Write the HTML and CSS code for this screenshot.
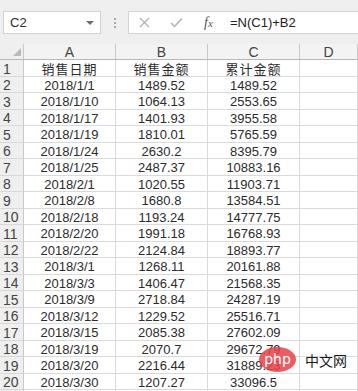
FILE: index.html
```html
<!DOCTYPE html>
<html>
  <head>
    <meta charset="UTF-8">
    <title>Sheet</title>
    <link rel="stylesheet" href="styles.css">
  </head>
  <body>
    <div class="formula-bar">
      <div class="name-box">
        <span class="cell-ref">C2</span>
        <span class="arrow"></span>
      </div>
      <div class="grip">
        <span></span><span></span><span></span>
      </div>
      <div class="formula-box">
        <span class="btn">
          <svg width="11" height="11" viewBox="0 0 11 11"><path d="M1 1L10 10M10 1L1 10" stroke="#b0b0b0" stroke-width="1.2" fill="none"/></svg>
        </span>
        <span class="btn">
          <svg width="13" height="11" viewBox="0 0 13 11"><path d="M1 6L4.5 9.5L12 1.5" stroke="#b0b0b0" stroke-width="1.4" fill="none"/></svg>
        </span>
        <span class="btn fx">f<i>x</i></span>
        <span class="formula">=N(C1)+B2</span>
      </div>
    </div>

    <div class="sheet">
      <div class="row col-heads">
        <div class="rh corner"><span class="tri"></span></div>
        <div class="cell">A</div><div class="cell">B</div><div class="cell">C</div><div class="cell">D</div>
      </div>
      <div class="row"><div class="rh">1</div><div class="cell zh">销售日期</div><div class="cell zh">销售金额</div><div class="cell zh">累计金额</div><div class="cell"></div></div>
      <div class="row"><div class="rh">2</div><div class="cell">2018/1/1</div><div class="cell">1489.52</div><div class="cell">1489.52</div><div class="cell"></div></div>
      <div class="row"><div class="rh">3</div><div class="cell">2018/1/10</div><div class="cell">1064.13</div><div class="cell">2553.65</div><div class="cell"></div></div>
      <div class="row"><div class="rh">4</div><div class="cell">2018/1/17</div><div class="cell">1401.93</div><div class="cell">3955.58</div><div class="cell"></div></div>
      <div class="row"><div class="rh">5</div><div class="cell">2018/1/19</div><div class="cell">1810.01</div><div class="cell">5765.59</div><div class="cell"></div></div>
      <div class="row"><div class="rh">6</div><div class="cell">2018/1/24</div><div class="cell">2630.2</div><div class="cell">8395.79</div><div class="cell"></div></div>
      <div class="row"><div class="rh">7</div><div class="cell">2018/1/25</div><div class="cell">2487.37</div><div class="cell">10883.16</div><div class="cell"></div></div>
      <div class="row"><div class="rh">8</div><div class="cell">2018/2/1</div><div class="cell">1020.55</div><div class="cell">11903.71</div><div class="cell"></div></div>
      <div class="row"><div class="rh">9</div><div class="cell">2018/2/8</div><div class="cell">1680.8</div><div class="cell">13584.51</div><div class="cell"></div></div>
      <div class="row"><div class="rh">10</div><div class="cell">2018/2/18</div><div class="cell">1193.24</div><div class="cell">14777.75</div><div class="cell"></div></div>
      <div class="row"><div class="rh">11</div><div class="cell">2018/2/20</div><div class="cell">1991.18</div><div class="cell">16768.93</div><div class="cell"></div></div>
      <div class="row"><div class="rh">12</div><div class="cell">2018/2/22</div><div class="cell">2124.84</div><div class="cell">18893.77</div><div class="cell"></div></div>
      <div class="row"><div class="rh">13</div><div class="cell">2018/3/1</div><div class="cell">1268.11</div><div class="cell">20161.88</div><div class="cell"></div></div>
      <div class="row"><div class="rh">14</div><div class="cell">2018/3/3</div><div class="cell">1406.47</div><div class="cell">21568.35</div><div class="cell"></div></div>
      <div class="row"><div class="rh">15</div><div class="cell">2018/3/9</div><div class="cell">2718.84</div><div class="cell">24287.19</div><div class="cell"></div></div>
      <div class="row"><div class="rh">16</div><div class="cell">2018/3/12</div><div class="cell">1229.52</div><div class="cell">25516.71</div><div class="cell"></div></div>
      <div class="row"><div class="rh">17</div><div class="cell">2018/3/15</div><div class="cell">2085.38</div><div class="cell">27602.09</div><div class="cell"></div></div>
      <div class="row"><div class="rh">18</div><div class="cell">2018/3/19</div><div class="cell">2070.7</div><div class="cell">29672.79</div><div class="cell"></div></div>
      <div class="row"><div class="rh">19</div><div class="cell">2018/3/20</div><div class="cell">2216.44</div><div class="cell">31889.23</div><div class="cell"></div></div>
      <div class="row"><div class="rh">20</div><div class="cell">2018/3/30</div><div class="cell">1207.27</div><div class="cell">33096.5</div><div class="cell"></div></div>
      <div class="row stub"><div class="rh"></div><div class="cell"></div><div class="cell"></div><div class="cell"></div><div class="cell"></div></div>
    </div>

    <div class="watermark">
      <span class="php">php</span>
      <span class="site">中文网</span>
    </div>
  </body>
</html>
```

FILE: styles.css
```css
body {
  margin: 0;
  padding: 0;
  width: 358px;
  height: 391px;
  overflow: hidden;
  background-color: #ffffff;
  font-family: "Liberation Sans", "Noto Sans CJK SC", sans-serif;
  color: #2b2b2b;
  position: relative;
}

.formula-bar {
  display: flex;
  align-items: flex-start;
  height: 44px;
  box-sizing: border-box;
  padding: 11px 0 0 3px;
  background-color: #efefef;
}

.name-box {
  display: flex;
  align-items: center;
  justify-content: space-between;
  width: 98px;
  height: 23px;
  box-sizing: border-box;
  padding: 0 6px 0 6px;
  background-color: #ffffff;
  border: 1px solid #d2d2d2;
  font-size: 13px;
}

.arrow {
  width: 0;
  height: 0;
  border-left: 4px solid transparent;
  border-right: 4px solid transparent;
  border-top: 4px solid #6d6d6d;
}

.grip {
  display: flex;
  flex-direction: column;
  align-items: center;
  justify-content: center;
  gap: 2px;
  width: 27px;
  height: 23px;
}

.grip span {
  width: 2px;
  height: 2px;
  background-color: #a8a8a8;
}

.formula-box {
  display: flex;
  align-items: center;
  flex: 1;
  height: 23px;
  box-sizing: border-box;
  padding-left: 8px;
  background-color: #ffffff;
  border: 1px solid #d2d2d2;
  border-right: none;
}

.btn {
  display: flex;
  align-items: center;
  justify-content: center;
  width: 15px;
  margin-right: 17px;
}

.btn.fx {
  font-family: "Liberation Serif", serif;
  font-style: italic;
  font-size: 14px;
  color: #555555;
  margin-right: 14px;
}

.btn.fx i {
  font-size: 11px;
}

.formula {
  font-size: 13px;
  color: #222222;
}

/* grid */
.sheet {
  display: flex;
  flex-direction: column;
  font-size: 13px;
}

.row {
  display: grid;
  grid-template-columns: 24px 92px 92px 92px 1fr;
  height: 17px;
}

.row:nth-child(odd) {
  height: 16px;
}

.row.stub {
  height: 8px;
}

.cell,
.rh {
  box-sizing: border-box;
  display: flex;
  align-items: center;
  justify-content: center;
  border-right: 1px solid #dadada;
  border-bottom: 1px solid #dadada;
  white-space: nowrap;
  overflow: hidden;
  padding-top: 1px;
}

.rh {
  justify-content: flex-start;
  padding-left: 3px;
  font-size: 14px;
  color: #444444;
  background-color: #efefef;
  border-right-color: #c8c8c8;
  border-bottom-color: #d8d8d8;
}

.col-heads .cell {
  font-size: 14px;
  color: #444444;
  background-color: #f3f3f3;
  border-right-color: #c8c8c8;
  border-bottom-color: #b8b8b8;
}

.col-heads .rh {
  border-bottom-color: #b8b8b8;
}

.corner {
  position: relative;
}

.tri {
  position: absolute;
  right: 2px;
  bottom: 3px;
  width: 0;
  height: 0;
  border-left: 8px solid transparent;
  border-bottom: 8px solid #b9b9b9;
}

.zh {
  letter-spacing: 1px;
}

.watermark {
  position: absolute;
  left: 259px;
  top: 347px;
  display: flex;
  align-items: center;
  gap: 9px;
}

.php {
  display: flex;
  align-items: center;
  justify-content: center;
  width: 37px;
  height: 25px;
  border-radius: 50%;
  background-color: rgba(232, 63, 72, 0.85);
  color: #ffffff;
  font-family: "DejaVu Sans", sans-serif;
  font-size: 14px;
  padding-bottom: 2px;
  box-sizing: border-box;
}

.site {
  font-family: "Noto Sans CJK SC", sans-serif;
  font-size: 14px;
  color: #1a1a1a;
}
```
